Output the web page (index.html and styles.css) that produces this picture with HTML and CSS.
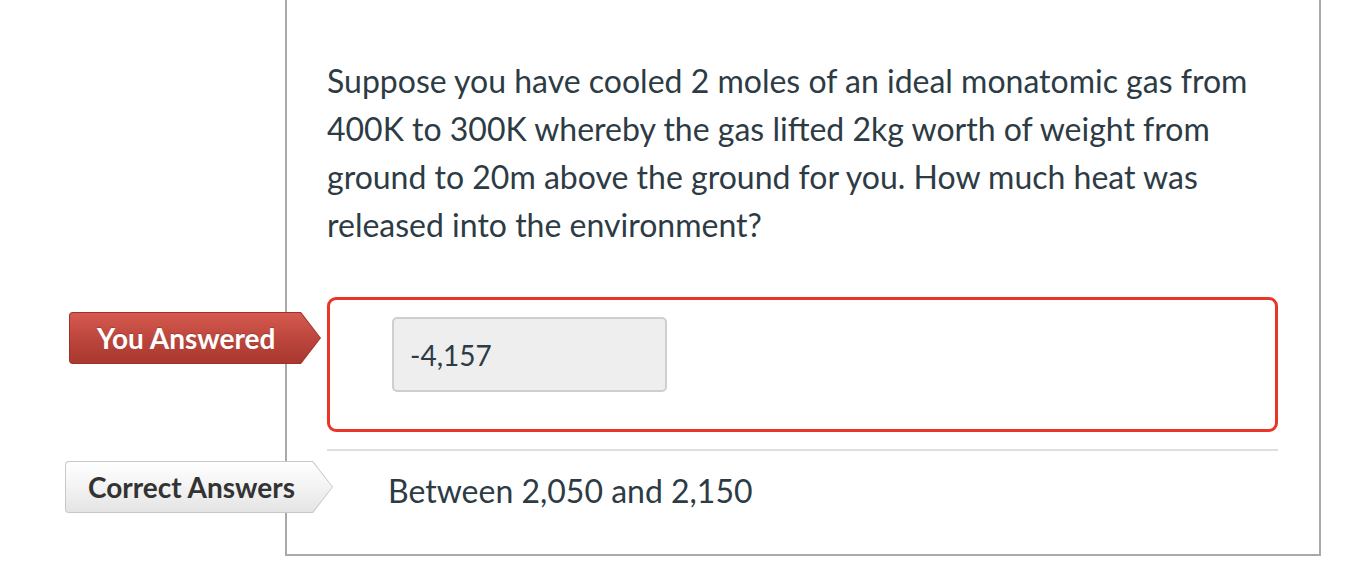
FILE: index.html
```html
<!DOCTYPE html>
<html>
<head>
<meta charset="utf-8">
<link rel="stylesheet" href="styles.css">
</head>
<body>
<div class="frame">
  <p class="question">Suppose you have cooled 2 moles of an ideal monatomic gas from 400K to 300K whereby the gas lifted 2kg worth of weight from ground to 20m above the ground for you. How much heat was released into the environment?</p>
  <div class="row row-you">
    <div class="tag tag-red"><div class="tag-inner"><span>You Answered</span></div></div>
    <div class="answer-box">
      <div class="answer-input">-4,157</div>
    </div>
  </div>
  <div class="divider"></div>
  <div class="row row-correct">
    <div class="tag tag-gray"><div class="tag-inner"><span>Correct Answers</span></div></div>
    <div class="correct-text">Between 2,050 and 2,150</div>
  </div>
</div>
</body>
</html>
```
FILE: styles.css
```css
html, body {
  margin: 0;
  padding: 0;
  background: #fff;
}
body {
  font-family: Lato, "Noto Sans", sans-serif;
  color: #2d3b45;
}
.frame {
  box-sizing: border-box;
  margin-left: 285px;
  width: 1036px;
  height: 556px;
  border: 2px solid #a9a9a9;
  border-top: none;
  padding: 57px 41px 0 40px;
}
.question {
  margin: 0;
  font-size: 32px;
  line-height: 48px;
}
.row {
  position: relative;
}
.row-you {
  margin-top: 48px;
}
.answer-box {
  box-sizing: border-box;
  height: 135px;
  border: 3px solid #ea3628;
  border-radius: 9px;
  padding: 17px 0 0 62px;
}
.answer-input {
  box-sizing: border-box;
  width: 275px;
  height: 75px;
  background: #eeeeee;
  border: 2px solid #cfcfcf;
  border-radius: 5px;
  display: flex;
  align-items: center;
  padding-left: 16px;
  font-size: 28px;
}
.divider {
  margin-top: 17px;
  height: 2px;
  background: #dedede;
}
.row-correct {
  padding: 16px 0 0 61px;
  font-size: 32px;
  line-height: 48px;
}
.tag {
  position: absolute;
  height: 52px;
  clip-path: polygon(0 0, calc(100% - 20px) 0, 100% 50%, calc(100% - 20px) 100%, 0 100%);
  border-radius: 4px 0 0 4px;
}
.tag-inner {
  position: absolute;
  inset: 1px;
  clip-path: polygon(0 0, calc(100% - 19.5px) 0, 100% 50%, calc(100% - 19.5px) 100%, 0 100%);
  border-radius: 3px 0 0 3px;
  display: flex;
  align-items: center;
  font-weight: bold;
  font-size: 28px;
}
.tag-red {
  top: 15px;
  left: -258px;
  width: 252px;
  background: #9f3128;
}
.tag-red .tag-inner {
  background: linear-gradient(#d65a4f, #b8433a 60%, #a9382f);
  color: #fff;
  padding-left: 27px;
  text-shadow: 0 -1px 0 rgba(0,0,0,0.2);
}
.tag-gray {
  top: 10px;
  left: -262px;
  width: 268px;
  background: #c8c8c8;
}
.tag-gray .tag-inner {
  background: linear-gradient(#ffffff, #f3f3f3 50%, #e4e4e4);
  color: #333;
  padding-left: 22px;
}
.correct-text {
  color: #2d3b45;
}
```
